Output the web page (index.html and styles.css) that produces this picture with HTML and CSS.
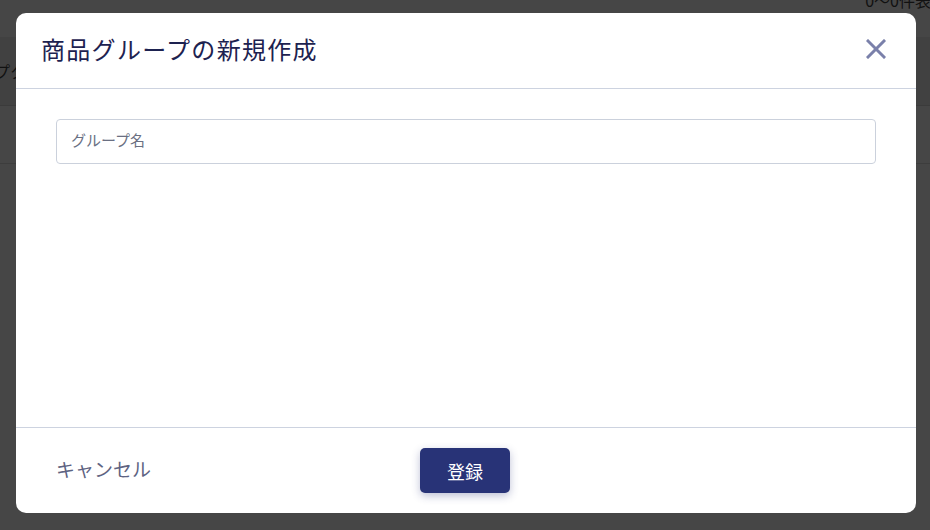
FILE: index.html
```html
<!DOCTYPE html>
<html lang="ja">
<head>
    <meta charset="UTF-8">
    <title>商品グループの新規作成</title>
    <link rel="stylesheet" href="styles.css">
</head>
<body>
    <!-- 背景のページ（暗くなっている） -->
    <div class="page">
        <div class="page-top"><span class="page-count">0〜0件表示</span></div>
        <div class="page-band"><span class="page-tab">プタ</span></div>
        <div class="page-row"></div>
    </div>

    <div class="overlay">
        <div class="modal">
            <div class="modal-header">
                <h2 class="modal-title">商品グループの新規作成</h2>
                <button class="close-btn" aria-label="閉じる">
                    <svg width="20" height="20" viewBox="0 0 20 20">
                        <path d="M2 2 L18 18 M18 2 L2 18" stroke="#7a80aa" stroke-width="3" stroke-linecap="square"/>
                    </svg>
                </button>
            </div>

            <div class="modal-body">
                <input type="text" class="text-input" placeholder="グループ名">
            </div>

            <div class="modal-footer">
                <a class="cancel-link">キャンセル</a>
                <button class="submit-btn">登録</button>
                <span></span>
            </div>
        </div>
    </div>
</body>
</html>
```

FILE: styles.css
```css
/* 全体 */
body {
    margin: 0;
    font-family: "Noto Sans CJK JP", "Noto Sans", sans-serif;
    background: #464646;
    width: 930px;
    height: 530px;
    overflow: hidden;
    position: relative;
}

/* 背景ページ */
.page-top {
    height: 37px;
    position: relative;
}
.page-count {
    position: absolute;
    right: -17px;
    top: -12px;
    font-size: 16px;
    color: #111;
}
.page-band {
    height: 68px;
    background: #414141;
    border-bottom: 1px solid #3b3b3b;
    display: flex;
    align-items: center;
    overflow: hidden;
}
.page-tab {
    margin-left: -6px;
    font-size: 16px;
    color: #111;
}
.page-row {
    height: 57px;
    border-bottom: 1px solid #3d3d3d;
}

/* モーダル */
.overlay {
    position: absolute;
    inset: 0;
    display: flex;
    justify-content: center;
    padding: 13px 0 0 2px;
}
.modal {
    width: 900px;
    height: 500px;
    background: #fff;
    border-radius: 10px;
    display: flex;
    flex-direction: column;
    overflow: hidden;
}

.modal-header {
    height: 76px;
    border-bottom: 1px solid #cdd3e0;
    display: flex;
    align-items: center;
    justify-content: space-between;
    padding: 0 30px 4px 25px;
    box-sizing: border-box;
}
.modal-title {
    margin: 0;
    font-size: 24px;
    font-weight: normal;
    color: #1d2250;
    letter-spacing: 1.3px;
}
.close-btn {
    background: none;
    border: none;
    padding: 0;
    width: 20px;
    height: 20px;
    cursor: pointer;
    display: flex;
}

.modal-body {
    flex: 1;
    padding: 30px 40px;
}
.text-input {
    width: 100%;
    height: 45px;
    box-sizing: border-box;
    border: 1px solid #cbd1dc;
    border-radius: 4px;
    padding: 0 14px 4px;
    font-family: inherit;
    font-size: 15px;
    color: #333;
}
.text-input::placeholder {
    color: #6a6f82;
}

.modal-footer {
    height: 85px;
    border-top: 1px solid #cdd3e0;
    display: grid;
    grid-template-columns: 1fr auto 1fr;
    align-items: center;
    padding: 0 40px;
}
.cancel-link {
    font-size: 19px;
    color: #5e6382;
    cursor: pointer;
    padding-bottom: 4px;
}
.submit-btn {
    width: 90px;
    height: 45px;
    background: #283377;
    color: #fff;
    border: none;
    border-radius: 5px;
    font-family: inherit;
    font-size: 18px;
    box-shadow: 0 3px 8px rgba(40, 51, 119, 0.3);
    cursor: pointer;
    margin-left: -2px;
}
```
